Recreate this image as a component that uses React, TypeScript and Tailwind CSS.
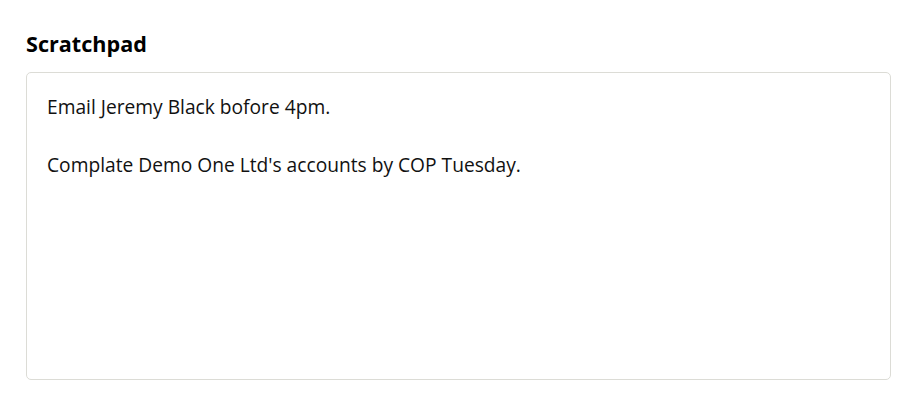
import React from 'react';

const notes = [
  'Email Jeremy Black bofore 4pm.',
  '',
  "Complate Demo One Ltd's accounts by COP Tuesday.",
];

const App: React.FC = () => {
  return (
    <div className="min-h-[415px] w-[918px] bg-white px-[26px] pt-[30px] font-['Open_Sans',sans-serif] text-black">
      <h2 className="text-[21.6px] font-bold leading-[28px] mb-[14px]">Scratchpad</h2>
      <div className="h-[308px] w-[865px] rounded-[5px] border border-[#dcdcd6] bg-white px-[20px] pt-[19px] text-[19.2px] leading-[29px] text-[#111]">
        {notes.map((line, i) => (
          <div key={i} className="h-[29px]">{line}</div>
        ))}
      </div>
    </div>
  );
};

export default App;
